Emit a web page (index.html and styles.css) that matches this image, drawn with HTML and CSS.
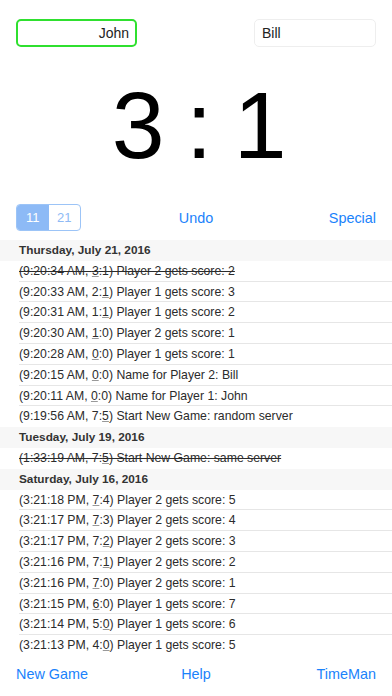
FILE: index.html
```
<!DOCTYPE html>
<html lang="en">
<head>
<meta charset="UTF-8">
<meta name="viewport" content="width=device-width, initial-scale=1.0">
<title>Score Keeper</title>
<link rel="stylesheet" href="styles.css">
</head>
<body>

<div class="app">
  <div class="names">
    <div class="name-field active">John</div>
    <div class="name-field right">Bill</div>
  </div>

  <div class="score">3 : 1</div>

  <div class="controls">
    <div class="segment">
      <span class="seg on">11</span>
      <span class="seg">21</span>
    </div>
    <span class="link undo">Undo</span>
    <span class="link special">Special</span>
  </div>

  <div class="log">
    <div class="day">Thursday, July 21, 2016</div>
    <div class="entry struck">(9:20:34 AM, <u>3</u>:1) Player 2 gets score: 2</div>
    <div class="entry">(9:20:33 AM, 2:<u>1</u>) Player 1 gets score: 3</div>
    <div class="entry">(9:20:31 AM, 1:<u>1</u>) Player 1 gets score: 2</div>
    <div class="entry">(9:20:30 AM, <u>1</u>:0) Player 2 gets score: 1</div>
    <div class="entry">(9:20:28 AM, <u>0</u>:0) Player 1 gets score: 1</div>
    <div class="entry">(9:20:15 AM, <u>0</u>:0) Name for Player 2: Bill</div>
    <div class="entry">(9:20:11 AM, <u>0</u>:0) Name for Player 1: John</div>
    <div class="entry last">(9:19:56 AM, 7:<u>5</u>) Start New Game: random server</div>
    <div class="day">Tuesday, July 19, 2016</div>
    <div class="entry struck last">(1:33:19 AM, 7:<u>5</u>) Start New Game: same server</div>
    <div class="day">Saturday, July 16, 2016</div>
    <div class="entry">(3:21:18 PM, <u>7</u>:4) Player 2 gets score: 5</div>
    <div class="entry">(3:21:17 PM, <u>7</u>:3) Player 2 gets score: 4</div>
    <div class="entry">(3:21:17 PM, 7:<u>2</u>) Player 2 gets score: 3</div>
    <div class="entry">(3:21:16 PM, 7:<u>1</u>) Player 2 gets score: 2</div>
    <div class="entry">(3:21:16 PM, <u>7</u>:0) Player 2 gets score: 1</div>
    <div class="entry">(3:21:15 PM, <u>6</u>:0) Player 1 gets score: 7</div>
    <div class="entry">(3:21:14 PM, 5:<u>0</u>) Player 1 gets score: 6</div>
    <div class="entry last">(3:21:13 PM, 4:<u>0</u>) Player 1 gets score: 5</div>
  </div>

  <div class="toolbar">
    <span class="link">New Game</span>
    <span class="link mid">Help</span>
    <span class="link end">TimeMan</span>
  </div>
</div>

</body>
</html>
```

FILE: styles.css
```
body {
  margin: 0;
  font-family: "Liberation Sans", Arial, sans-serif;
  background-color: #fff;
  color: #222;
}
.app {
  width: 392px;
  height: 696px;
  overflow: hidden;
}
.names {
  display: flex;
  justify-content: space-between;
  padding: 19px 16px 0 16px;
}
.name-field {
  width: 121px;
  height: 28px;
  box-sizing: border-box;
  border: 1px solid #eee;
  border-radius: 5px;
  font-size: 14px;
  line-height: 26px;
  padding: 0 7px;
}
.name-field.active {
  width: 121px;
  border: 2px solid #2fe02f;
  text-align: right;
  line-height: 24px;
  padding: 0 6px;
}
.name-field.right {
  width: 122px;
}
.score {
  text-align: center;
  font-size: 95px;
  line-height: 95px;
  height: 95px;
  margin-top: 31px;
  color: #000;
  letter-spacing: -2.5px;
  padding-left: 4px;
}
.controls {
  display: grid;
  grid-template-columns: 1fr auto 1fr;
  align-items: center;
  margin-top: 31px;
  padding: 0 16px;
  height: 27px;
}
.segment {
  display: flex;
  width: 65px;
  height: 27px;
  box-sizing: border-box;
  border: 1px solid #9cc4f7;
  border-radius: 4px;
  overflow: hidden;
}
.seg {
  flex: 1;
  text-align: center;
  font-size: 13px;
  line-height: 25px;
  color: #8fbaf5;
}
.seg.on {
  background-color: #8dbaf6;
  color: #fff;
}
.link {
  color: #1a82fb;
  font-size: 14.4px;
}
.special {
  justify-self: end;
}
.log {
  margin-top: 9px;
  height: 416px;
  font-size: 12.25px;
}
.day {
  height: 20.8px;
  line-height: 21px;
  background-color: #f7f7f7;
  padding-left: 19px;
  font-size: 11.8px;
  font-weight: bold;
  color: #333;
  box-sizing: border-box;
}
.entry {
  height: 20.8px;
  line-height: 20px;
  margin-left: 19px;
  border-bottom: 1px solid #e6e6e6;
  box-sizing: border-box;
  color: #2b2b2b;
  white-space: nowrap;
}
.entry.last {
  border-bottom: none;
}
.entry u {
  text-decoration-color: #999;
}
.struck {
  text-decoration: line-through;
}
.toolbar {
  display: grid;
  grid-template-columns: 1fr auto 1fr;
  padding: 10px 16px 0 16px;
}
.toolbar .end {
  justify-self: end;
}
```
